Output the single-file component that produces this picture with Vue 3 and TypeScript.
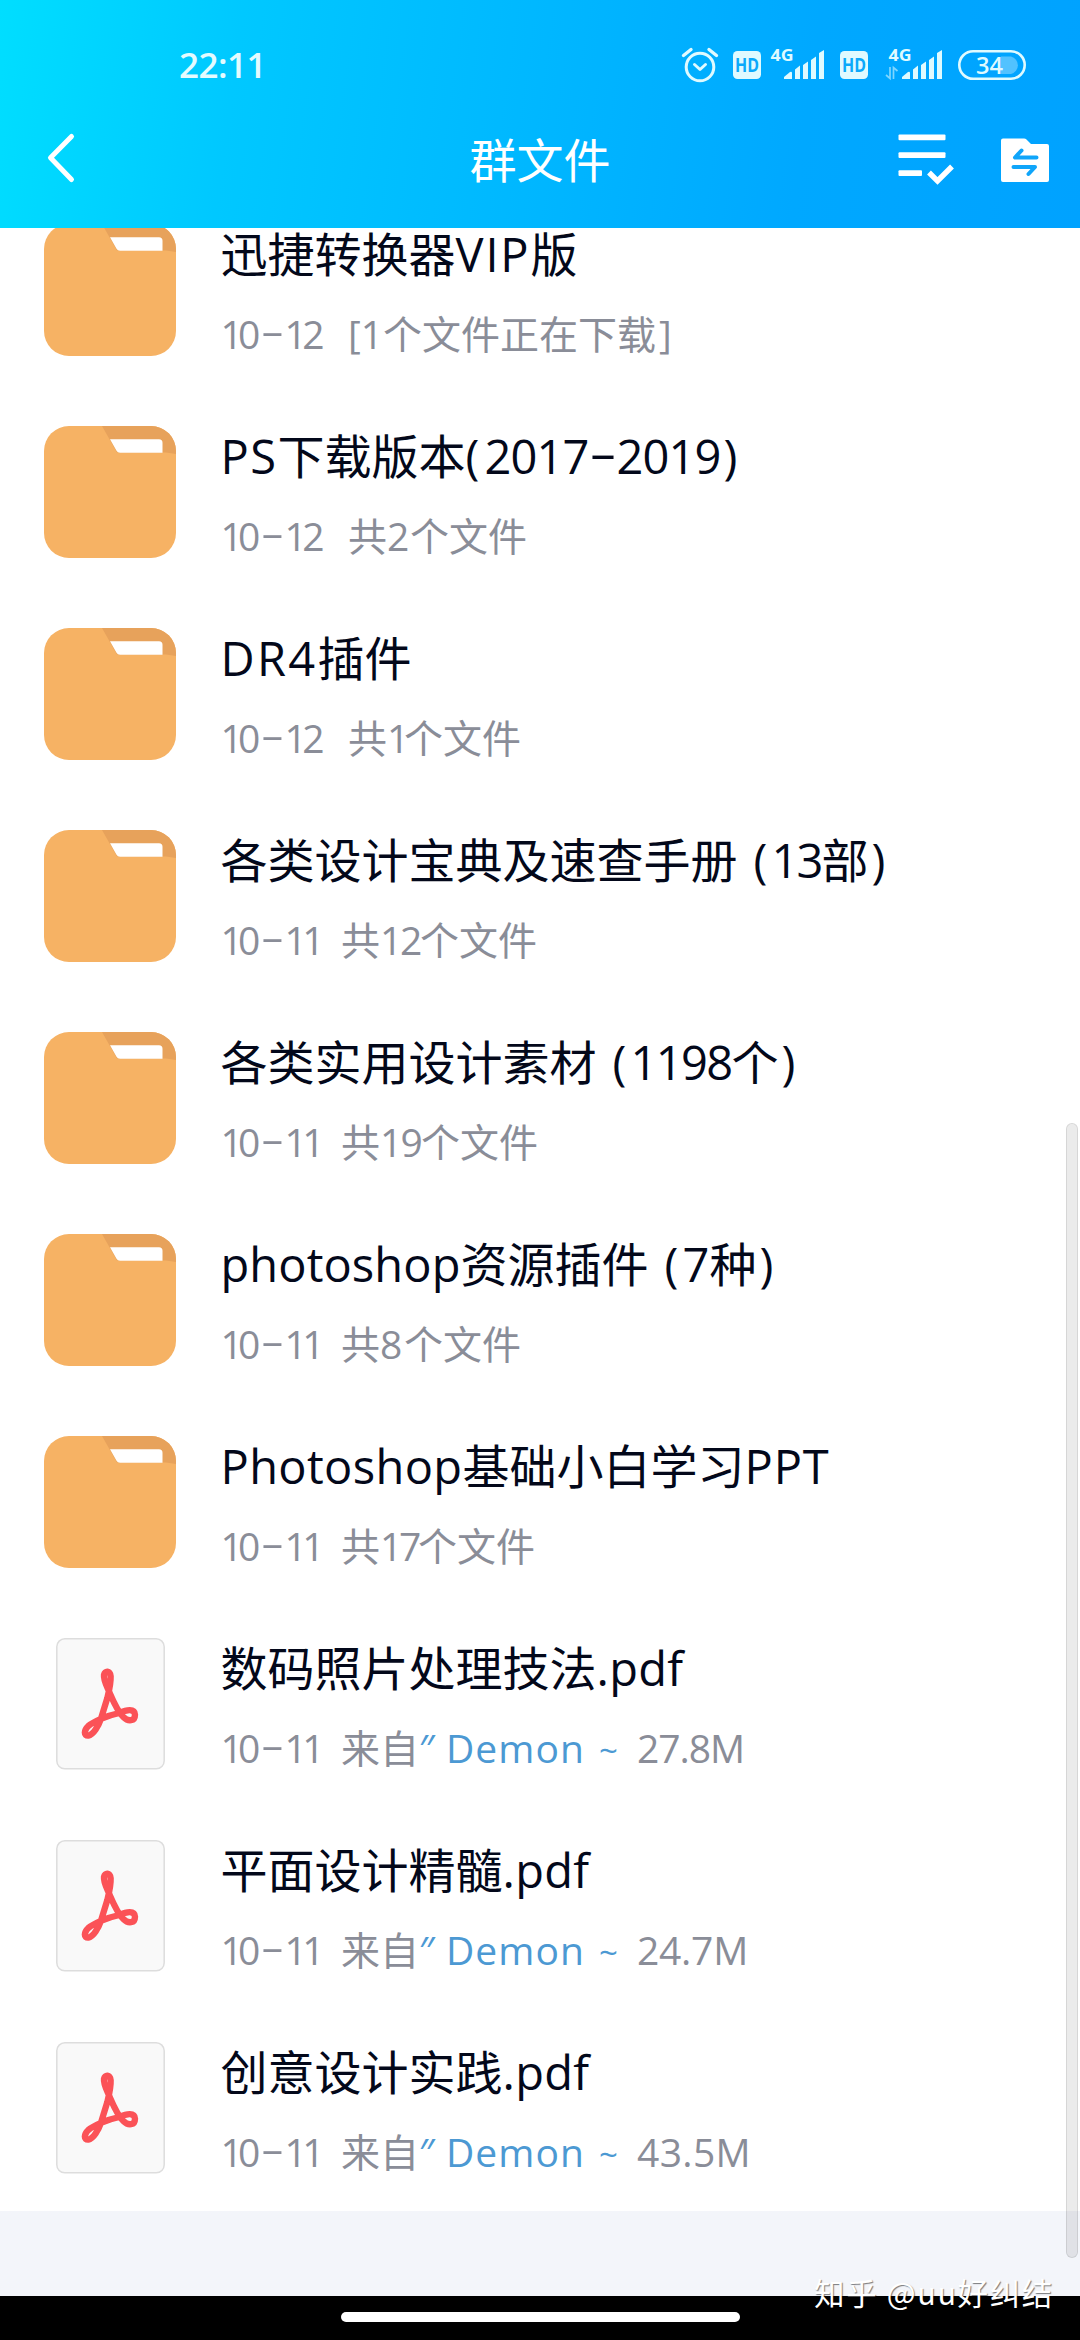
<script setup lang="ts">
interface Run {
  text: string
  width: number
  kind?: 'dash' | 'name' | 'tilde' | 'close'
}
interface Entry {
  type: 'folder' | 'pdf'
  title: Run[]
  meta: Run[]
}

const TITLE = 47
const META = 39

// Spreads a run of text over its intended advance width.
const vFit = {
  mounted(el: HTMLElement, binding: { value: number }) {
    const count = Array.from(el.textContent ?? '').length
    const natural = el.getBoundingClientRect().width
    if (count > 0 && binding.value > 0) {
      el.style.letterSpacing = `${(binding.value - natural) / count}px`
    }
  },
}

const han = (text: string, size: number): Run => ({ text, width: text.length * size })
const run = (text: string, width: number, kind?: Run['kind']): Run => ({ text, width, kind })

const date = (day: string): Run[] => [
  run('10', 35),
  run('-', 29, 'dash'),
  run(day, 35.5),
  run('  ', day === '11' ? 21 : 28),
]
const counted = (day: string, n: string, width: number): Run[] => [
  ...date(day),
  han('共', META),
  run(n, width),
  han('个文件', META),
]
const sent = (size: string, width: number): Run[] => [
  ...date('11'),
  han('来自', META),
  run('″ ', 27, 'name'),
  run('Demon', 139, 'name'),
  run(' ~ ', 52, 'tilde'),
  run(size, width),
]
const open = (): Run[] => [run(' ', 16), run('(', 18)]
const close = run(')', 16, 'close')

const entries: Entry[] = [
  {
    type: 'folder',
    title: [han('迅捷转换器', TITLE), run('VIP', 75), han('版', TITLE)],
    meta: [...date('12'), run('[1', 35), han('个文件正在下载', META), run(']', 14, 'close')],
  },
  {
    type: 'folder',
    title: [
      run('PS', 57),
      han('下载版本', TITLE),
      run('(', 19),
      run('2017', 104),
      run('-', 28, 'dash'),
      run('2019', 104),
      close,
    ],
    meta: counted('12', '2', 23),
  },
  { type: 'folder', title: [run('DR4', 97), han('插件', TITLE)], meta: counted('12', '1', 17) },
  {
    type: 'folder',
    title: [han('各类设计宝典及速查手册', TITLE), ...open(), run('13', 50), han('部', TITLE), close],
    meta: counted('11', '12', 40),
  },
  {
    type: 'folder',
    title: [han('各类实用设计素材', TITLE), ...open(), run('1198', 101), han('个', TITLE), close],
    meta: counted('11', '19', 41),
  },
  {
    type: 'folder',
    title: [run('photoshop', 240), han('资源插件', TITLE), ...open(), run('7', 27), han('种', TITLE), close],
    meta: counted('11', '8', 24),
  },
  {
    type: 'folder',
    title: [run('Photoshop', 242), han('基础小白学习', TITLE), run('PPT', 85)],
    meta: counted('11', '17', 38),
  },
  { type: 'pdf', title: [han('数码照片处理技法', TITLE), run('.pdf', 87)], meta: sent('27.8M', 107) },
  { type: 'pdf', title: [han('平面设计精髓', TITLE), run('.pdf', 87)], meta: sent('24.7M', 111) },
  { type: 'pdf', title: [han('创意设计实践', TITLE), run('.pdf', 87)], meta: sent('43.5M', 114) },
]
</script>

<template>
  <div class="screen">
    <header class="header">
      <div class="status">
        <span class="clock"><span v-fit="87">22:11</span></span>
        <svg class="status-icons" width="348" height="40" viewBox="680 44 348 40">
          <g fill="none" stroke="#dffaff" stroke-width="3" stroke-linecap="round" stroke-linejoin="round">
            <circle cx="700" cy="67" r="13.800" />
            <path d="M694.5 64.5l5.500 5 5.500-5" />
            <path d="M683.500 55.500l7.500-6M716.500 55.500l-7.500-6" stroke-width="3.400" />
          </g>
          <g fill="#dffaff">
            <rect x="733" y="51" width="28" height="28" rx="4.500" />
            <rect x="840" y="51" width="28" height="28" rx="4.500" />
          </g>
          <g class="hd">
            <text x="747" y="72" text-anchor="middle" textLength="24" lengthAdjust="spacingAndGlyphs">HD</text>
            <text x="854" y="72" text-anchor="middle" textLength="24" lengthAdjust="spacingAndGlyphs">HD</text>
          </g>
          <g class="net">
            <text x="770.500" y="60.500" textLength="23" lengthAdjust="spacingAndGlyphs">4G</text>
            <text x="888.500" y="60.500" textLength="23" lengthAdjust="spacingAndGlyphs">4G</text>
          </g>
          <g v-for="x in [784, 902]" :key="x" fill="#dffaff" :transform="`translate(${x} 0)`">
            <path d="M0 79v-2l6-5q2-1 2 1v6z" />
            <path d="M11 79V69.500l5-4V79zM19 79V65l5-3.500V79zM27 79V60l5-3.500V79zM35 79V53l5-3V79z" />
          </g>
          <path d="M890 67v11.500l-4-3.500M893.500 79V67.500l4 3.500" fill="none" stroke="#7fd6ff" stroke-width="1.700" />
          <path d="M1001 56.500h10a9 9 0 0 1 0 17.500h-10z" fill="#52c2ff" />
          <rect x="959.300" y="51.200" width="65.400" height="27.600" rx="13.800" fill="none" stroke="#dffaff" stroke-width="2.600" />
          <text class="charge" x="976" y="73.500" textLength="27" lengthAdjust="spacingAndGlyphs">34</text>
        </svg>
      </div>
      <div class="nav">
        <svg class="back" width="30" height="52" viewBox="46 132 30 52">
          <path d="M71.500 136.500L50.500 157.800 71.500 179.500" fill="none" stroke="#fff" stroke-width="5" stroke-linecap="round" stroke-linejoin="round" />
        </svg>
        <h1>群文件</h1>
        <svg class="actions" width="154" height="54" viewBox="897 132 154 54">
          <g fill="#fff">
            <rect x="898.500" y="134.500" width="47" height="5.800" rx="1" />
            <rect x="898.500" y="152.300" width="47" height="5.800" rx="1" />
            <rect x="898.500" y="170.300" width="23.500" height="5.800" rx="1" />
            <path d="M1003 138.500h21q1.500 0 2.500 1l4.500 4.500h16q2 0 2 2v34q0 2-2 2h-44q-2 0-2-2v-39.500q0-2 2-2z" />
          </g>
          <path d="M929 172.500l8.500 8.500 14.500-14.500" fill="none" stroke="#fff" stroke-width="5.400" />
          <path d="M1021.500 150.500l-6.500 7h21.500M1013.500 167h21.500l-6.500 7" fill="none" stroke="#0fa5fa" stroke-width="4" stroke-linecap="round" stroke-linejoin="round" />
        </svg>
      </div>
    </header>

    <main class="viewport">
      <ul class="list">
        <li v-for="(entry, i) in entries" :key="i" class="row">
          <div class="thumb">
            <svg v-if="entry.type === 'folder'" width="132" height="132" viewBox="0 0 132 132">
              <rect width="132" height="132" rx="25" fill="#f6b264" />
              <path d="M58 0h49a25 25 0 0 1 25 25v3l-10-1.500H73z" fill="#e7a25b" />
              <path d="M66 13.200h49q3.500 0 3.500 3.500V26.800H76q-2.500 0-3.500-2z" fill="#fff" />
            </svg>
            <svg v-else width="109" height="132" viewBox="0 0 109 132">
              <rect x=".8" y=".8" width="107.400" height="130" rx="8" fill="#f9f9f9" stroke="#dddddd" stroke-width="1.500" />
              <g transform="scale(.3333) translate(-78 -55)">
                <path
                  d="M237 215C228 195 220 180 222 166C225 152 240 152 242 170C243 190 238 210 232 235L213 297C205 320 190 345 175 348C161 349 161 332 175 319C190 306 230 288 268 280C290 270 314 266 315 285C315 305 295 307 280 292C262 275 250 245 237 215Z"
                  fill="none" stroke="#fb5257" stroke-width="19" stroke-linejoin="round" />
              </g>
            </svg>
          </div>
          <div class="texts">
            <p class="title"><template v-for="(r, k) in entry.title" :key="k"><span v-if="r.kind === 'dash'" class="dash" :style="{ width: r.width + 'px' }">{{ r.text }}</span><span v-else v-fit="r.width" :class="r.kind">{{ r.text }}</span></template></p>
            <p class="meta"><template v-for="(r, k) in entry.meta" :key="k"><span v-if="r.kind === 'dash'" class="dash" :style="{ width: r.width + 'px' }">{{ r.text }}</span><span v-else v-fit="r.width" :class="r.kind">{{ r.text }}</span></template></p>
          </div>
        </li>
      </ul>
      <div class="scrollbar"></div>
    </main>

    <footer class="gesture"><div class="pill"></div></footer>
    <div class="watermark"><span v-fit="240">知乎 @uu好纠结</span></div>
  </div>
</template>

<style>
body {
  margin: 0;
  background: #000;
}
</style>

<style scoped>
.screen {
  position: relative;
  display: flex;
  flex-direction: column;
  width: 1080px;
  height: 2340px;
  overflow: hidden;
  font-family: 'Open Sans', 'Noto Sans CJK SC', sans-serif;
}
.header {
  flex: none;
  height: 228px;
  background: linear-gradient(98deg, #00deff 0%, #00c8ff 22%, #00b8ff 48%, #00a8ff 74%, #00a2ff 100%);
}
.status {
  display: flex;
  justify-content: space-between;
  height: 88px;
  padding: 44px 52px 0 179px;
  box-sizing: border-box;
}
.clock {
  color: #e4fbff;
  font-size: 35px;
  font-weight: 600;
  line-height: 42px;
}
.status-icons {
  display: block;
}
.hd text {
  font: 700 19px 'Open Sans', sans-serif;
  fill: #0aa9fb;
}
.net text {
  font: 700 16.5px 'Open Sans', sans-serif;
  fill: #dffaff;
}
.charge {
  font: 600 23px 'Open Sans', sans-serif;
  fill: #dffaff;
}
.nav {
  display: grid;
  grid-template-columns: 1fr auto 1fr;
  align-items: start;
  height: 140px;
  padding: 44px 29px 0 46px;
  box-sizing: border-box;
}
.actions {
  justify-self: end;
}
h1 {
  margin: 0 0 0 -17px;
  color: #fff;
  font-size: 47px;
  font-weight: 400;
  line-height: 56px;
}
.viewport {
  position: relative;
  flex: none;
  height: 2068px;
  overflow: hidden;
  background: #f3f5fa;
}
.list {
  margin: -37px 0 0;
  padding: 0;
  list-style: none;
  background: #fff;
}
.row {
  display: flex;
  height: 202px;
}
.thumb {
  display: flex;
  justify-content: center;
  align-items: flex-start;
  width: 132px;
  margin-left: 44px;
  padding-top: 33px;
}
.texts {
  margin-left: 44.5px;
  padding-top: 33px;
}
p {
  margin: 0;
  white-space: pre;
}
.title {
  color: #03081a;
  font-size: 47px;
  line-height: 60px;
}
.meta {
  margin-top: 25px;
  color: #8a8d98;
  font-size: 39px;
  line-height: 50px;
}
.dash {
  display: inline-block;
  text-align: center;
  transform: translateY(-0.09em) scaleX(1.85);
}
.meta .dash {
  transform: translate(2px, -0.09em) scaleX(1.9);
}
.close {
  margin-left: 3px;
}
.name,
.tilde {
  color: #4c99d3;
}
.tilde {
  font-size: 33px;
}
.scrollbar {
  position: absolute;
  top: 895px;
  right: 2px;
  width: 12px;
  height: 1135px;
  box-sizing: border-box;
  border: 1px solid rgba(0, 0, 0, 0.09);
  border-radius: 6px;
  background: rgba(0, 0, 0, 0.08);
}
.gesture {
  display: flex;
  justify-content: center;
  flex: none;
  height: 44px;
  padding-top: 16px;
  box-sizing: border-box;
  background: #000;
}
.pill {
  width: 399px;
  height: 10px;
  border-radius: 5px;
  background: #fff;
}
.watermark {
  position: absolute;
  left: 814px;
  top: 2271px;
  color: #fff;
  font-family: 'Noto Sans CJK SC', sans-serif;
  font-size: 30.5px;
  line-height: 42px;
  white-space: pre;
  text-shadow: 1px 1px 1px rgba(0, 0, 0, 0.5);
}
</style>
